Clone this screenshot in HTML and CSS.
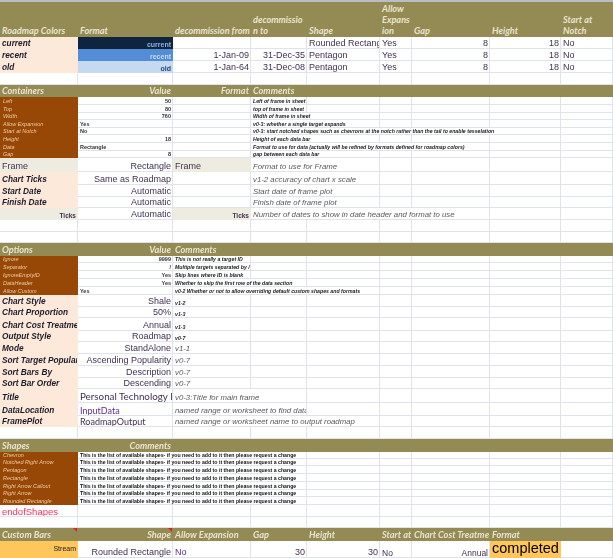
FILE: index.html
```html
<!doctype html>
<html lang="en">
<head>
    <meta charset="UTF-8">
    <title>Roadmap parameters</title>
    <link rel="stylesheet" href="styles.css">
</head>
<body>
<table class="sheet">
    <colgroup>
        <col class="col-a"><col class="col-b"><col class="col-c"><col class="col-d"><col class="col-e"><col class="col-f"><col class="col-g"><col class="col-h"><col class="col-i">
    </colgroup>
    <!-- roadmap colors -->
    <tr class="h35 head"><td>Roadmap Colors<td>Format<td>decommission from<td>decommissio<br>n to<td>Shape<td>Allow<br>Expans<br>ion<td>Gap<td>Height<td>Start at<br>Notch</tr>
    <tr class="h12"><td class="label">current<td class="fmt-current num">current<td><td><td class="val">Rounded Rectangle<td class="val">Yes<td class="val num">8<td class="val num">18<td class="val">No</tr>
    <tr class="h12"><td class="label">recent<td class="fmt-recent num">recent<td class="val num">1-Jan-09<td class="val num">31-Dec-35<td class="val">Pentagon<td class="val">Yes<td class="val num">8<td class="val num">18<td class="val">No</tr>
    <tr class="h12"><td class="label">old<td class="fmt-old num">old<td class="val num">1-Jan-64<td class="val num">31-Dec-08<td class="val">Pentagon<td class="val">Yes<td class="val num">8<td class="val num">18<td class="val">No</tr>
    <tr class="h12"><td><td><td><td><td><td><td><td><td></tr>

    <!-- containers -->
    <tr class="h12 head"><td>Containers<td class="num">Value<td class="num">Format<td>Comments<td><td><td><td><td></tr>
    <tr class="h8"><td class="brown">Left<td class="tiny num">50<td><td class="note">Left of frame in sheet<td><td><td><td><td></tr>
    <tr class="h8"><td class="brown">Top<td class="tiny num">80<td><td class="note">top of frame in sheet<td><td><td><td><td></tr>
    <tr class="h7"><td class="brown">Width<td class="tiny num">760<td><td class="note" colspan="2">Width of frame in sheet<td><td><td><td></tr>
    <tr class="h8"><td class="brown">Allow Expansion<td class="tiny">Yes<td><td class="note" colspan="2">v0-3: whether a single target expands<td><td><td><td></tr>
    <tr class="h7"><td class="brown">Start at Notch<td class="tiny">No<td><td class="note" colspan="5">v0-3: start notched shapes such as chevrons at the notch rather than the tail to enable tesselation<td></tr>
    <tr class="h8"><td class="brown">Height<td class="tiny num">18<td><td class="note" colspan="2">Height of each data bar<td><td><td><td></tr>
    <tr class="h8"><td class="brown">Data<td class="tiny">Rectangle<td><td class="note" colspan="4">Format to use for data (actually will be refined by formats defined for roadmap colors)<td><td></tr>
    <tr class="h7"><td class="brown">Gap<td class="tiny num">8<td><td class="note" colspan="2">gap between each data bar<td><td><td><td></tr>
    <tr class="h14"><td class="stone val">Frame<td class="val num">Rectangle<td class="stone val">Frame<td class="remark" colspan="2">Format to use for Frame<td><td><td><td></tr>
    <tr class="h13"><td class="label">Chart Ticks<td class="val num">Same as Roadmap<td><td class="remark" colspan="2">v1-2 accuracy of chart x scale<td><td><td><td></tr>
    <tr class="h12"><td class="label">Start Date<td class="val num">Automatic<td><td class="remark" colspan="2">Start date of frame plot<td><td><td><td></tr>
    <tr class="h11"><td class="label">Finish Date<td class="val num">Automatic<td><td class="remark" colspan="2">Finish date of frame plot<td><td><td><td></tr>
    <tr class="h12"><td class="stone ticks num">Ticks<td class="val num">Automatic<td class="stone ticks num">Ticks<td class="remark" colspan="4">Number of dates to show in date header and format to use<td><td></tr>
    <tr class="h12"><td><td><td><td><td><td><td><td><td></tr>
    <tr class="h11"><td><td><td><td><td><td><td><td><td></tr>

    <!-- options -->
    <tr class="h13 head"><td>Options<td class="num">Value<td>Comments<td><td><td><td><td><td></tr>
    <tr class="h7"><td class="brown">Ignore<td class="tiny num">9999<td class="note">This is not really a target ID<td><td><td><td><td><td></tr>
    <tr class="h8"><td class="brown">Separator<td class="tiny num">/<td class="note">Multiple targets separated by /<td><td><td><td><td><td></tr>
    <tr class="h8"><td class="brown">IgnoreEmptyID<td class="tiny num">Yes<td class="note">Skip lines where ID is blank<td><td><td><td><td><td></tr>
    <tr class="h8"><td class="brown">DataHeader<td class="tiny num">Yes<td class="note" colspan="2">Whether to skip the first row of the data section<td><td><td><td><td></tr>
    <tr class="h8"><td class="brown">Allow Custom<td class="tiny">Yes<td class="note" colspan="3">v0-2 Whether or not to allow overriding default custom shapes and formats<td><td><td><td></tr>
    <tr class="h12"><td class="label">Chart Style<td class="val num">Shale<td class="note">v1-2<td><td><td><td><td><td></tr>
    <tr class="h11"><td class="label">Chart Proportion<td class="val num">50%<td class="note">v1-3<td><td><td><td><td><td></tr>
    <tr class="h13"><td class="label">Chart Cost Treatment<td class="val num">Annual<td class="note">v1-3<td><td><td><td><td><td></tr>
    <tr class="h11"><td class="label">Output Style<td class="val num">Roadmap<td class="note">v0-7<td><td><td><td><td><td></tr>
    <tr class="h12"><td class="label">Mode<td class="val num">StandAlone<td class="remark">v1-1<td><td><td><td><td><td></tr>
    <tr class="h12"><td class="label">Sort Target Popularity<td class="val num">Ascending Popularity<td class="remark">v0-7<td><td><td><td><td><td></tr>
    <tr class="h12"><td class="label">Sort Bars By<td class="val num">Description<td class="remark">v0-7<td><td><td><td><td><td></tr>
    <tr class="h11"><td class="label">Sort Bar Order<td class="val num">Descending<td class="remark">v0-7<td><td><td><td><td><td></tr>
    <tr class="h14"><td class="label">Title<td class="plain title">Personal Technology Roadmap<td class="remark" colspan="2">v0-3:Title for main frame<td><td><td><td><td></tr>
    <tr class="h13"><td class="label">DataLocation<td class="plain purple">InputData<td class="remark" colspan="2">named range or worksheet to find data<td><td><td><td><td></tr>
    <tr class="h11"><td class="label">FramePlot<td class="plain">RoadmapOutput<td class="remark" colspan="3">named range or worksheet name to output roadmap<td><td><td><td></tr>
    <tr class="h12"><td><td><td><td><td><td><td><td><td></tr>

    <!-- shapes -->
    <tr class="h13 head"><td>Shapes<td class="num">Comments<td><td><td><td><td><td><td></tr>
    <tr class="h7"><td class="brown">Chevron<td class="shape-note" colspan="3">This is the list of available shapes- if you need to add to it then please request a change<td><td><td><td><td></tr>
    <tr class="h7"><td class="brown">Notched Right Arrow<td class="shape-note" colspan="3">This is the list of available shapes- if you need to add to it then please request a change<td><td><td><td><td></tr>
    <tr class="h8"><td class="brown">Pentagon<td class="shape-note" colspan="3">This is the list of available shapes- if you need to add to it then please request a change<td><td><td><td><td></tr>
    <tr class="h8"><td class="brown">Rectangle<td class="shape-note" colspan="3">This is the list of available shapes- if you need to add to it then please request a change<td><td><td><td><td></tr>
    <tr class="h8"><td class="brown">Right Arrow Callout<td class="shape-note" colspan="3">This is the list of available shapes- if you need to add to it then please request a change<td><td><td><td><td></tr>
    <tr class="h7"><td class="brown">Right Arrow<td class="shape-note" colspan="3">This is the list of available shapes- if you need to add to it then please request a change<td><td><td><td><td></tr>
    <tr class="h8"><td class="brown">Rounded Rectangle<td class="shape-note" colspan="3">This is the list of available shapes- if you need to add to it then please request a change<td><td><td><td><td></tr>
    <tr class="h12"><td class="end-mark">endofShapes<td><td><td><td><td><td><td><td></tr>
    <tr class="h11"><td><td><td><td><td><td><td><td><td></tr>

    <!-- custom bars -->
    <tr class="h13 head"><td class="flagged">Custom Bars<td class="num flagged">Shape<td>Allow Expansion<td>Gap<td>Height<td>Start at<td>Chart Cost Treatment<td>Format<td></tr>
    <tr class="h17"><td class="stream num">Stream<td class="val num">Rounded Rectangle<td class="val purple">No<td class="val num">30<td class="val num">30<td class="val small-val">No<td class="val num small-val">Annual<td class="completed">completed<td></tr>
</table>
</body>
</html>
```

FILE: styles.css
```css
html, body {
    margin: 0;
    height: 558px;
    overflow: hidden;
    background-color: #fff;
}
.sheet {
    width: 613px;
    table-layout: fixed;
    border-collapse: separate;
    border-spacing: 0;
    border-top: 2px solid #b9bdc6;
    font-family: "Liberation Sans", Arial, sans-serif;
    filter: blur(0.35px);
}
.col-a { width: 78px; }
.col-b { width: 95px; }
.col-c { width: 78px; }
.col-d { width: 56px; }
.col-e { width: 73px; }
.col-f { width: 32px; }
.col-g { width: 78px; }
.col-h { width: 71px; }
.col-i { width: 52px; }

.h7 { height: 7px; }
.h8 { height: 8px; }
.h11 { height: 11px; }
.h12 { height: 12px; }
.h13 { height: 13px; }
.h14 { height: 14px; }
.h17 { height: 17px; }
.h35 { height: 35px; }

td {
    position: relative;
    box-sizing: border-box;
    padding: 0 1px 0 2px;
    border-right: 1px solid #e0e3ee;
    border-bottom: 1px solid #e0e3ee;
    overflow: hidden;
    white-space: nowrap;
    vertical-align: bottom;
    line-height: 1;
    font-size: 6px;
    color: #403152;
}
.num {
    text-align: right;
}
.head td {
    background-color: #948a54;
    border-color: #948a54;
    color: #e9e5cf;
    font-family: Lato, sans-serif;
    font-size: 9.2px;
    font-weight: 700;
    font-style: italic;
    line-height: 11px;
}
.label {
    background-color: #fde9d9;
    border-color: #fde9d9;
    color: #1d1b2e;
    font-size: 8.25px;
    font-weight: 700;
    font-style: italic;
}
.val {
    font-size: 9px;
}
.small-val {
    font-size: 8.5px;
}
.plain {
    font-family: Lato, sans-serif;
    font-size: 9px;
}
.title {
    font-size: 9.8px;
}
.purple {
    color: #5f2d91;
}
.fmt-current {
    background-color: #0f243e;
    border-color: #0f243e;
    color: #8db4e2;
    font-size: 7px;
    font-weight: 700;
}
.fmt-recent {
    background-color: #538dd5;
    border-color: #538dd5;
    color: #c5d9f1;
    font-size: 7px;
    font-weight: 700;
}
.fmt-old {
    background-color: #c5d9f1;
    border-color: #c5d9f1;
    color: #1f497d;
    font-size: 7px;
    font-weight: 700;
}
.brown {
    background-color: #974806;
    border-color: #974806;
    color: #f2c9a2;
    font-size: 5.5px;
    font-style: italic;
    padding-left: 3px;
}
.tiny {
    font-size: 5.5px;
    font-weight: 700;
    color: #333;
}
.note {
    font-size: 5.2px;
    font-weight: 700;
    font-style: italic;
    color: #1a1a1a;
}
.remark {
    font-size: 7.8px;
    font-style: italic;
    color: #5a5a5a;
}
.stone {
    background-color: #eeece1;
    border-color: #eeece1;
}
.ticks {
    font-size: 6.5px;
    font-weight: 700;
}
.shape-note {
    font-size: 5.2px;
    font-weight: 700;
    color: #111;
}
.end-mark {
    font-size: 9.5px;
    color: #ff2f5f;
}
.stream {
    background-color: #ffc65c;
    border-color: #ffc65c;
    color: #222;
    font-size: 7px;
    vertical-align: top;
    padding-top: 4px;
}
.completed {
    background-color: #ffc65c;
    border-color: #ffc65c;
    color: #000;
    font-size: 14.5px;
    padding-left: 2px;
    vertical-align: top;
}
.flagged::after {
    content: '';
    position: absolute;
    top: 0;
    right: 0;
    border-top: 4px solid #e0201c;
    border-left: 4px solid transparent;
}
```
